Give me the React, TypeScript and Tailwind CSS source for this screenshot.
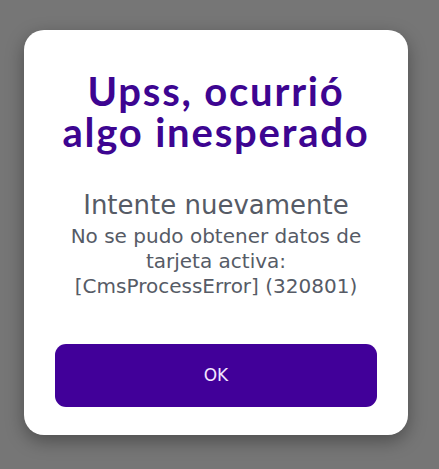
import React from 'react';

export default function App() {
  return (
    <div className="w-full h-[469px] bg-[#767676] pl-[24px] pt-[30px] overflow-hidden">
      {/* Error dialog */}
      <div className="w-[384px] h-[405px] bg-white rounded-[20px] shadow-[0_6px_18px_rgba(0,0,0,0.35)] px-[20px] pt-[41px] flex flex-col items-center">
        <h1 className="font-['Lato',sans-serif] text-[40px] leading-[41px] font-bold tracking-[1.8px] text-[#3d0591] text-center">
          Upss, ocurrió
          <br />
          algo inesperado
        </h1>
        <p className="mt-[38px] font-['DejaVu_Sans',sans-serif] text-[26px] leading-[28px] text-[#565b66] text-center">Intente nuevamente</p>
        <p className="mt-[5px] font-['DejaVu_Sans',sans-serif] text-[20px] leading-[25px] text-[#565b66] text-center">
          No se pudo obtener datos de
          <br />
          tarjeta activa:
          <br />
          [CmsProcessError] (320801)
        </p>
        <button className="mt-[45px] w-[322px] h-[63px] shrink-0 rounded-[11px] bg-[#410099] text-[#f3e6ff] font-['DejaVu_Sans',sans-serif] text-[17px] flex items-center justify-center">
          OK
        </button>
      </div>
    </div>
  );
}
